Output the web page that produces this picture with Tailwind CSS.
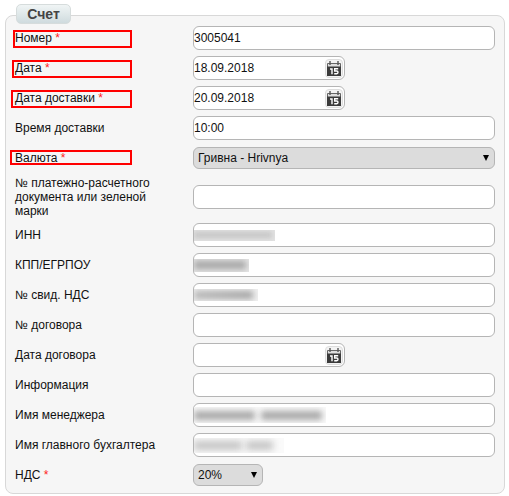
<!DOCTYPE html>
<html lang="ru">
<head>
<meta charset="utf-8">
<title>Счет</title>
<script src="https://cdn.jsdelivr.net/npm/@tailwindcss/browser@4"></script>
</head>
<body class="bg-white overflow-hidden font-['Liberation_Sans',Arial,sans-serif] text-xs leading-[14px] text-[#111]">
<svg class="hidden">
  <symbol id="cal" viewBox="0 0 14 15">
    <path d="M0.5 6V2.5h13V6" fill="#dedede" stroke="#666"/>
    <path d="M0 5.5h14V15H0z" fill="#3b3b3b"/>
    <path d="M3 0v4M11 0v4" stroke="#555" stroke-width="1.4"/>
    <path d="M3 8h2v5.2M11.2 7.8H7.7v2.2h2q1.3 0 1.3 1.3t-1.3 1.4H7.2" fill="none" stroke="#fff" stroke-width="1.4"/>
  </symbol>
</svg>
<main class="relative ml-[5px] mt-[15px] w-[500px] h-[479px] rounded-lg border border-[#d8d8d8] bg-[#f6f6f6] pt-[7px] pl-[9px]">
  <h1 class="absolute left-[10px] -top-[12px] w-[55px] h-5 rounded-[5px] border border-[#d6dcdc] bg-linear-to-b from-[#f0f5f5] to-[#cfdbde] text-center text-sm leading-[19px] font-bold text-[#444]">Счет</h1>

  <div class="flex h-[30px] items-center"><label class="relative w-[178px]">Номер <span class="text-[#f22]">*</span><span class="absolute -left-[2px] -top-px w-[119px] h-[18px] border-2 border-[#f00]"></span></label><div class="flex items-center w-[302px] h-6 rounded-md border border-[#b5b5b5] bg-white">3005041</div></div>
  <div class="flex h-[30px] items-center"><label class="relative w-[178px]">Дата <span class="text-[#f22]">*</span><span class="absolute -left-[3px] -top-px w-[120px] h-[18px] border-2 border-[#f00]"></span></label><div class="flex items-center justify-between w-[152px] h-6 rounded-md border border-[#b5b5b5] bg-white pr-px">18.09.2018<span class="flex items-center justify-center w-[18px] h-[19px] rounded-sm border border-[#ddd] bg-[#f3f3f3]"><svg class="w-[14px] h-[15px]"><use href="#cal"/></svg></span></div></div>
  <div class="flex h-[30px] items-center"><label class="relative w-[178px]">Дата доставки <span class="text-[#f22]">*</span><span class="absolute -left-[4px] -top-px w-[121px] h-[18px] border-2 border-[#f00]"></span></label><div class="flex items-center justify-between w-[152px] h-6 rounded-md border border-[#b5b5b5] bg-white pr-px">20.09.2018<span class="flex items-center justify-center w-[18px] h-[19px] rounded-sm border border-[#ddd] bg-[#f3f3f3]"><svg class="w-[14px] h-[15px]"><use href="#cal"/></svg></span></div></div>
  <div class="flex h-[30px] items-center"><label class="w-[178px]">Время доставки</label><div class="flex items-center w-[302px] h-6 rounded-md border border-[#b5b5b5] bg-white">10:00</div></div>
  <div class="flex h-[30px] items-center"><label class="relative w-[178px]">Валюта <span class="text-[#f22]">*</span><span class="absolute -left-[5px] -top-px w-[122px] h-[15px] border-2 border-[#f00]"></span></label><div class="flex items-center justify-between w-[302px] h-[22px] rounded-md border border-[#b5b5b5] bg-[#dcdcdc] pl-1 pr-[5px]">Гривна - Hrivnya<svg class="w-[6px] h-[6px] mb-px" viewBox="0 0 6 6"><path d="M0 0h6L3 6z"/></svg></div></div>
  <div class="flex h-[47px] items-center"><label class="w-[178px] pr-5 pt-px">№ платежно-расчетного документа или зеленой марки</label><div class="w-[302px] h-6 rounded-md border border-[#b5b5b5] bg-white"></div></div>
  <div class="flex h-[30px] items-center"><label class="w-[178px]">ИНН</label><div class="flex items-center w-[302px] h-6 rounded-md border border-[#b5b5b5] bg-white"><span class="flex items-center overflow-hidden w-[81px] h-[11px] bg-[#e2e2e2]"><span class="w-[78px] h-[6px] bg-[#c6c6c6] blur-[2.5px]"></span></span></div></div>
  <div class="flex h-[30px] items-center"><label class="w-[178px]">КПП/ЕГРПОУ</label><div class="flex items-center w-[302px] h-6 rounded-md border border-[#b5b5b5] bg-white"><span class="flex items-center overflow-hidden w-[55px] h-[13px] bg-[#e6e6e6]"><span class="w-[52px] h-[8px] bg-[#a3a3a3] blur-[3px]"></span></span></div></div>
  <div class="flex h-[30px] items-center"><label class="w-[178px]">№ свид. НДС</label><div class="flex items-center w-[302px] h-6 rounded-md border border-[#b5b5b5] bg-white"><span class="flex items-center overflow-hidden w-[64px] h-[12px] bg-[#f0f0f0]"><span class="w-[59px] h-[8px] bg-linear-to-r from-[#b4b4b4] to-[#a0a0a0] blur-[3px]"></span></span></div></div>
  <div class="flex h-[30px] items-center"><label class="w-[178px]">№ договора</label><div class="w-[302px] h-6 rounded-md border border-[#b5b5b5] bg-white"></div></div>
  <div class="flex h-[30px] items-center"><label class="w-[178px]">Дата договора</label><div class="flex items-center justify-end w-[152px] h-6 rounded-md border border-[#b5b5b5] bg-white pr-px"><span class="flex items-center justify-center w-[18px] h-[19px] rounded-sm border border-[#ddd] bg-[#f3f3f3]"><svg class="w-[14px] h-[15px]"><use href="#cal"/></svg></span></div></div>
  <div class="flex h-[30px] items-center"><label class="w-[178px]">Информация</label><div class="w-[302px] h-6 rounded-md border border-[#b5b5b5] bg-white"></div></div>
  <div class="flex h-[30px] items-center"><label class="w-[178px]">Имя менеджера</label><div class="flex items-center w-[302px] h-6 rounded-md border border-[#b5b5b5] bg-white"><span class="flex items-center gap-[6px] overflow-hidden w-[132px] h-[16px] bg-[#fafafa]"><span class="w-[61px] h-[9px] bg-[#a8a8a8] blur-[3px]"></span><span class="w-[61px] h-[9px] bg-[#a8a8a8] blur-[3px]"></span></span></div></div>
  <div class="flex h-[30px] items-center"><label class="w-[178px]">Имя главного бухгалтера</label><div class="flex items-center w-[302px] h-6 rounded-md border border-[#b5b5b5] bg-white"><span class="flex items-center gap-1 overflow-hidden w-[90px] h-[15px] bg-[#fafafa]"><span class="w-[48px] h-[9px] bg-[#c4c4c4] blur-[3.5px]"></span><span class="w-[27px] h-[9px] bg-[#c4c4c4] blur-[3.5px]"></span></span></div></div>
  <div class="flex h-[30px] items-center"><label class="w-[178px]">НДС <span class="text-[#f22]">*</span></label><div class="flex items-center justify-between w-[70px] h-[22px] rounded-md border border-[#b5b5b5] bg-[#dcdcdc] pl-1 pr-[5px]">20%<svg class="w-[6px] h-[6px] mb-px" viewBox="0 0 6 6"><path d="M0 0h6L3 6z"/></svg></div></div>
</main>
</body>
</html>
